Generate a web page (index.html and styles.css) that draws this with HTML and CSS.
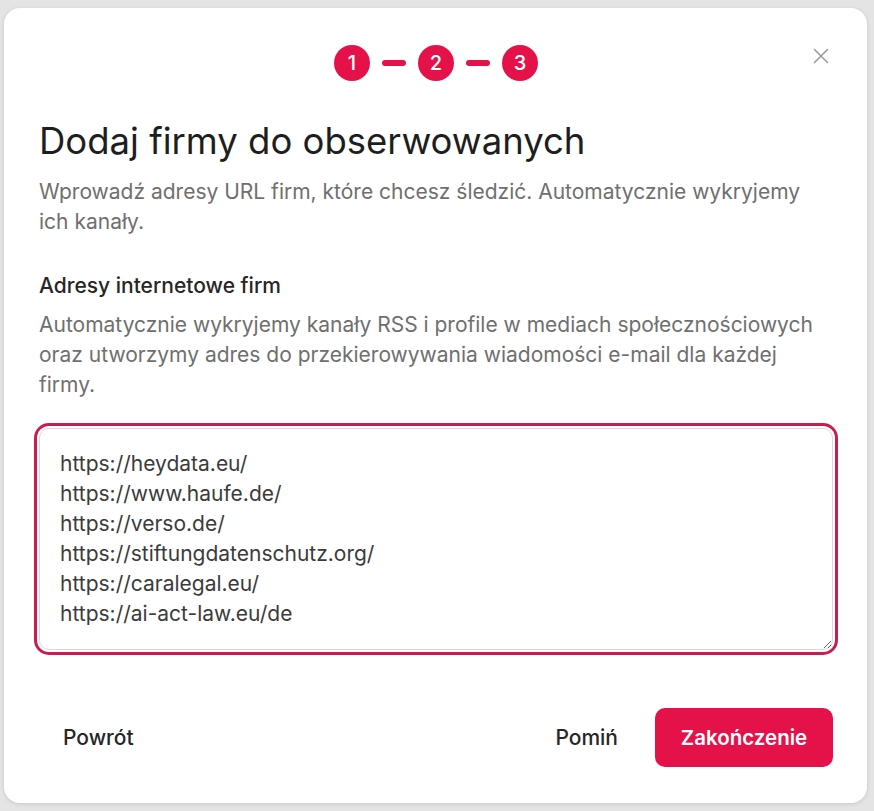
FILE: index.html
```html
<!DOCTYPE html>
<html lang="pl">
<head>
<meta charset="utf-8">
<title>Dodaj firmy do obserwowanych</title>
<link rel="stylesheet" href="styles.css">
</head>
<body>
<div class="modal">
  <button class="close" aria-label="Zamknij">
    <svg viewBox="0 0 16 16" width="16" height="16"><path d="M1.5 1.5 L14.5 14.5 M14.5 1.5 L1.5 14.5" stroke="#9b9b9b" stroke-width="1.6" stroke-linecap="round" fill="none"/></svg>
  </button>
  <div class="steps">
    <span class="step">1</span>
    <span class="dash"></span>
    <span class="step">2</span>
    <span class="dash"></span>
    <span class="step">3</span>
  </div>
  <h1 class="title">Dodaj firmy do obserwowanych</h1>
  <p class="subtitle">Wprowadź adresy URL firm, które chcesz śledzić. Automatycznie wykryjemy ich kanały.</p>
  <label class="label" for="urls">Adresy internetowe firm</label>
  <p class="hint">Automatycznie wykryjemy kanały RSS i profile w mediach społecznościowych oraz utworzymy adres do przekierowywania wiadomości e-mail dla każdej firmy.</p>
  <textarea id="urls" class="urls" autofocus>https://heydata.eu/
https://www.haufe.de/
https://verso.de/
https://stiftungdatenschutz.org/
https://caralegal.eu/
https://ai-act-law.eu/de</textarea>
  <div class="actions">
    <button class="ghost">Powrót</button>
    <div class="right">
      <button class="ghost">Pomiń</button>
      <button class="primary">Zakończenie</button>
    </div>
  </div>
</div>
<script src="script.js"></script>
</body>
</html>
```

FILE: script.js
```js
var t = document.getElementById('urls');
t.focus();
t.selectionStart = t.selectionEnd = t.value.length;
```

FILE: styles.css
```css
* { box-sizing: border-box; }
html, body { margin: 0; padding: 0; }
body {
  background: #e4e4e4;
  font-family: Inter, "Noto Sans", sans-serif;
  width: 874px;
  height: 811px;
  overflow: hidden;
}
.modal {
  position: relative;
  margin: 8px 7px 0 4px;
  width: 863px;
  height: 795px;
  background: #fff;
  border-radius: 16px;
  box-shadow: 0 1px 4px rgba(0,0,0,0.12);
  padding: 37px 34px 36px 35px;
  display: flex;
  flex-direction: column;
}
.close {
  position: absolute;
  top: 40px;
  right: 38px;
  width: 16px;
  height: 16px;
  padding: 0;
  border: 0;
  background: none;
  display: block;
}
.close svg { display: block; }
.steps {
  display: flex;
  justify-content: center;
  align-items: center;
  gap: 12px;
  height: 36px;
}
.step {
  width: 36px;
  height: 36px;
  border-radius: 50%;
  background: #e5124a;
  color: #fff;
  font-size: 20px;
  font-weight: 500;
  display: flex;
  align-items: center;
  justify-content: center;
}
.dash {
  width: 24px;
  height: 6px;
  border-radius: 3px;
  background: #e5124a;
}
.title {
  margin: 38px 0 0 0;
  font-size: 36.5px;
  line-height: 44px;
  font-weight: 400;
  color: #1e1e1e;
}
.subtitle {
  margin: 14px 0 0 0;
  font-size: 21px;
  line-height: 30px;
  color: #6f6f6f;
}
.label {
  display: block;
  margin: 35px 0 0 0;
  font-size: 21px;
  line-height: 28px;
  font-weight: 500;
  color: #262626;
}
.hint {
  margin: 10px 0 0 0;
  font-size: 21px;
  line-height: 30px;
  color: #6f6f6f;
}
.urls {
  margin: 28px 0 0 0;
  width: 794px;
  height: 222px;
  border: 1px solid #d9d9d9;
  border-radius: 10px;
  padding: 20px 20px;
  font-family: Inter, "Noto Sans", sans-serif;
  font-size: 21px;
  line-height: 30px;
  color: #3b3b3b;
  resize: vertical;
  outline: none;
  box-shadow: 0 0 0 2px #fff, 0 0 0 5px #c81d4f;
  caret-color: #111;
}
.actions {
  margin-top: auto;
  display: flex;
  justify-content: space-between;
  align-items: center;
}
.right {
  display: flex;
  align-items: center;
  gap: 13px;
}
button {
  font-family: Inter, "Noto Sans", sans-serif;
  cursor: pointer;
}
.ghost {
  height: 59px;
  padding: 0 24px;
  border: 0;
  background: none;
  font-size: 21px;
  font-weight: 500;
  color: #262626;
  border-radius: 10px;
}
.primary {
  width: 178px;
  height: 59px;
  border: 0;
  border-radius: 10px;
  background: #e5124a;
  color: #fff;
  font-size: 20.5px;
  font-weight: 600;
}
```
